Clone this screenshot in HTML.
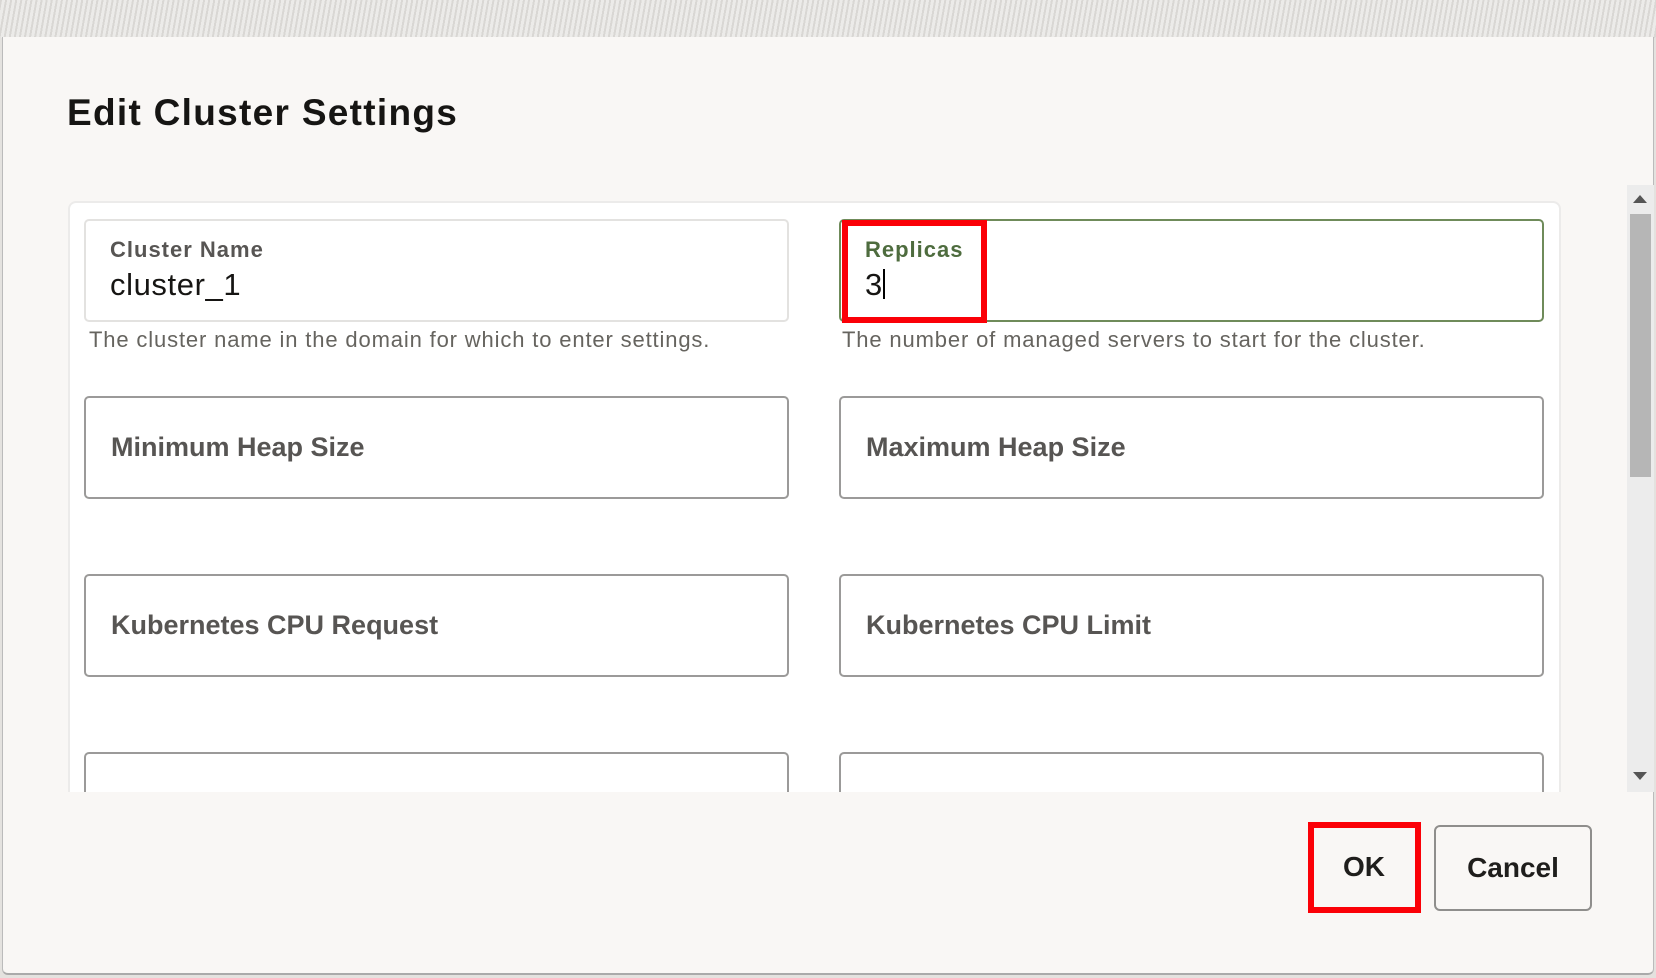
<!DOCTYPE html>
<html><head><style>
*{box-sizing:border-box;margin:0;padding:0}
body{width:1656px;height:978px;overflow:hidden;background:#e4e2df;font-family:"Liberation Sans",Arial,sans-serif;position:relative}
.band{position:absolute;left:0;top:0;width:1656px;height:38px;background:repeating-linear-gradient(100deg,#d9d7d4 0 2px,#ecebe9 2px 5px)}
.dlg{position:absolute;left:2px;top:37px;width:1652px;height:938px;background:#f9f7f5;border-left:1px solid #bbb;border-right:1px solid #bbb;border-bottom:2px solid #aaa;border-radius:0 0 6px 6px}
.abs{position:absolute}
h1{position:absolute;left:67px;top:92px;font-size:37px;font-weight:bold;color:#161513;letter-spacing:1.3px}
.panel{position:absolute;left:68px;top:201px;width:1493px;height:591px;background:#fff;border:2px solid #ecebea;border-bottom:none;border-radius:8px 8px 0 0;overflow:hidden}
.f{position:absolute;width:705px;height:103px;background:#fff;border:2px solid #9b9a99;border-radius:5px}
.ph{position:absolute;left:25px;top:34px;font-size:27px;font-weight:bold;color:#575553}
.lbl{position:absolute;left:24px;top:16px;font-size:22px;font-weight:bold;color:#575553;letter-spacing:1px}
.val{position:absolute;left:24px;top:46px;font-size:31px;color:#161513;letter-spacing:0.6px}
.help{position:absolute;font-size:22px;color:#66645f;letter-spacing:0.85px}
.sb{position:absolute;left:1627px;top:185px;width:27px;height:607px;background:#ececec}
.btn{position:absolute;height:86px;border:2px solid #8f8e8c;border-radius:6px;background:#f9f7f5;font-size:28px;font-weight:bold;color:#1f1e1c;display:flex;align-items:center;justify-content:center}
.red{position:absolute;border:6px solid #fb0007}
</style></head><body>
<div class="band"></div>
<div class="dlg"></div>
<h1>Edit Cluster Settings</h1>
<div class="panel"></div>
<div class="f" style="left:84px;top:219px;border-color:#e3e2e0;border-width:2px"><div class="lbl">Cluster Name</div><div class="val">cluster_1</div></div>
<div class="f" style="left:839px;top:219px;border-color:#6f8b5a"><div class="lbl" style="color:#4e6c3e">Replicas</div><div class="val">3<span style="display:inline-block;width:2px;height:30px;background:#000;vertical-align:-4px"></span></div></div>
<div class="help" style="left:89px;top:327px">The cluster name in the domain for which to enter settings.</div>
<div class="help" style="left:842px;top:327px">The number of managed servers to start for the cluster.</div>
<div class="f" style="left:84px;top:396px"><div class="ph">Minimum Heap Size</div></div>
<div class="f" style="left:839px;top:396px"><div class="ph">Maximum Heap Size</div></div>
<div class="f" style="left:84px;top:574px"><div class="ph">Kubernetes CPU Request</div></div>
<div class="f" style="left:839px;top:574px"><div class="ph">Kubernetes CPU Limit</div></div>
<div style="position:absolute;left:70px;top:750px;width:1490px;height:42px;overflow:hidden">
<div class="f" style="left:14px;top:2px"></div><div class="f" style="left:769px;top:2px"></div></div>
<div class="abs" style="left:68px;top:792px;width:1560px;height:10px;background:#f9f7f5"></div>
<div class="sb"></div>
<div class="abs" style="left:1630px;top:214px;width:21px;height:263px;background:#b6b6b6"></div>
<div class="abs" style="left:1633px;top:195px;width:0;height:0;border-left:7px solid transparent;border-right:7px solid transparent;border-bottom:8px solid #555"></div>
<div class="abs" style="left:1633px;top:772px;width:0;height:0;border-left:7px solid transparent;border-right:7px solid transparent;border-top:8px solid #555"></div>
<div class="red" style="left:842px;top:220px;width:145px;height:103px"></div>
<div class="btn" style="left:1315px;top:824px;width:98px;border:none;background:transparent">OK</div>
<div class="red" style="left:1308px;top:822px;width:113px;height:91px"></div>
<div class="btn" style="left:1434px;top:825px;width:158px">Cancel</div>
</body></html>
